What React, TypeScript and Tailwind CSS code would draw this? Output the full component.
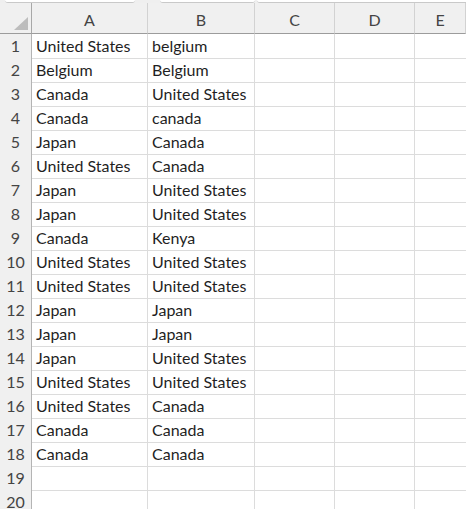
const colA = [
  "United States",
  "Belgium",
  "Canada",
  "Canada",
  "Japan",
  "United States",
  "Japan",
  "Japan",
  "Canada",
  "United States",
  "United States",
  "Japan",
  "Japan",
  "Japan",
  "United States",
  "United States",
  "Canada",
  "Canada",
  "",
  "",
];

const colB = [
  "belgium",
  "Belgium",
  "United States",
  "canada",
  "Canada",
  "Canada",
  "United States",
  "United States",
  "Kenya",
  "United States",
  "United States",
  "Japan",
  "Japan",
  "United States",
  "United States",
  "Canada",
  "Canada",
  "Canada",
  "",
  "",
];

const headers = ["A", "B", "C", "D", "E"];

const gridCols = "grid grid-cols-[32px_116px_107px_80px_80px_1fr]";

export default function App() {
  return (
    <div
      className="h-[509px] w-[466px] overflow-hidden bg-white text-[#1f1f1f]"
      style={{ fontFamily: "Lato, 'Open Sans', sans-serif" }}
    >
      {/* remnants of the formula bar above the sheet */}
      <div className="flex h-[3px] bg-[#efefef]">
        <div className="ml-[5px] w-[130px] rounded-b-[3px] border-b border-[#c9c9c9] bg-white" />
        <div className="ml-[25px] w-[95px] rounded-b-[3px] border-b border-[#c9c9c9] bg-white" />
        <div className="ml-[2px] flex-1 rounded-bl-[3px] border-b border-[#c9c9c9] bg-white" />
      </div>

      <div className={gridCols + " h-[31px] bg-[#f0f0f0]"}>
        <div className="relative border-r border-b border-[#a8a8a8] border-b-[#9c9c9c]">
          <div className="absolute bottom-[3px] right-[3px] h-0 w-0 border-b-[13px] border-l-[14px] border-b-[#bdbdbd] border-l-transparent" />
        </div>
        {headers.map((h) => (
          <div
            key={h}
            className="flex items-center justify-center border-r border-b border-[#d2d2d2] border-b-[#9c9c9c] pt-[3px] text-[16px] text-[#444]"
          >
            {h}
          </div>
        ))}
      </div>

      {colA.map((a, i) => (
        <div key={i} className={gridCols + " h-[24px]"}>
          <div className="flex items-center justify-center border-r border-b border-[#b4b4b4] border-b-[#dadada] bg-[#f0f0f0] text-[16px] text-[#444]">
            {i + 1}
          </div>
          <div className="flex items-center border-r border-b border-[#dcdcdc] pl-[4px] text-[16px]">
            {a}
          </div>
          <div className="flex items-center border-r border-b border-[#dcdcdc] pl-[4px] text-[16px]">
            {colB[i]}
          </div>
          <div className="border-r border-b border-[#dcdcdc]" />
          <div className="border-r border-b border-[#dcdcdc]" />
          <div className="border-b border-[#dcdcdc]" />
        </div>
      ))}
    </div>
  );
}
